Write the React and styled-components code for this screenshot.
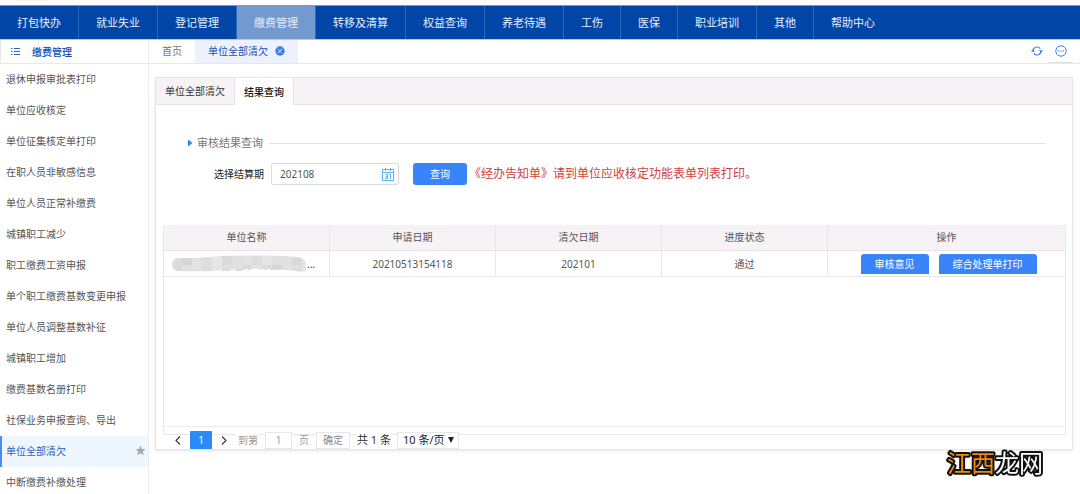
import React, { useState } from "react";
import styled, { createGlobalStyle } from "styled-components";

const Global = createGlobalStyle`
  * { box-sizing: border-box; }
  body { margin: 0; background: #fff; }
  body, button, input, select {
    font-family: "Noto Sans", "Noto Sans CJK SC", sans-serif;
    font-size: 10px;
    line-height: 16px;
    color: #555;
  }
  button, input, select { margin: 0; }
  a { color: inherit; text-decoration: none; }
  ul { list-style: none; margin: 0; padding: 0; }
`;

const Page = styled.div`
  height: 100vh;
  display: flex;
  flex-direction: column;
  overflow: hidden;
`;

const TopStrip = styled.div`
  flex: none;
  height: 5px;
  padding-left: 16px;
  &::before {
    content: "";
    display: block;
    width: 32px;
    height: 1px;
    background: #fdeef0;
  }
`;

const MainNav = styled.nav`
  flex: none;
  display: flex;
  height: 35px;
  background: #0145a6;
  border-top: 1px solid #6f9ad0;
  border-bottom: 1px solid #b5cae6;
`;

const NavLink = styled.a`
  display: flex;
  align-items: center;
  padding: 0 17px;
  font-size: 11px;
  white-space: nowrap;
  color: #e6effa;
  background: ${(p) => (p.$active ? "#7399cf" : "transparent")};
  border-right: 1px solid #2f68b6;
  &:last-child { border-right: 0; }
`;

const Body = styled.div`
  flex: 1;
  min-height: 0;
  display: flex;
`;

const Sidebar = styled.aside`
  flex: none;
  width: 149px;
  border-right: 1px solid #ebebeb;
`;

const SideTitle = styled.div`
  display: flex;
  align-items: center;
  gap: 12px;
  height: 24px;
  padding-left: 10px;
  color: #0f4fae;
  font-weight: 500;
  border-left: 1px solid #e8e8e8;
  border-bottom: 1px solid #e8e8e8;
`;

const SideLink = styled.a`
  display: flex;
  align-items: center;
  justify-content: space-between;
  height: 31px;
  padding: 0 2px 2px 4px;
  border-left: 2px solid ${(p) => (p.$active ? "#4a8af8" : "transparent")};
  background: ${(p) => (p.$active ? "#eef6ff" : "transparent")};
  color: ${(p) => (p.$active ? "#2c5fb8" : "#555")};
`;

const Main = styled.main`
  flex: 1;
  min-width: 0;
`;

const TabBar = styled.div`
  display: flex;
  height: 24px;
  border-bottom: 1px solid #e8e8e8;
`;

const PageTab = styled.a`
  display: flex;
  align-items: center;
  gap: 7px;
  padding: 0 13px 2px;
  color: ${(p) => (p.$active ? "#1552b0" : "#777")};
  background: ${(p) => (p.$active ? "#edf1fe" : "#fff")};
`;

const BarTools = styled.div`
  margin-left: auto;
  display: flex;
  padding-right: 7px;
`;

const IconButton = styled.button`
  display: flex;
  align-items: center;
  justify-content: center;
  width: 24px;
  padding: 0;
  border: 0;
  border-bottom: 1px solid ${(p) => (p.$line ? "#ddd" : "transparent")};
  background: none;
`;

const Card = styled.section`
  margin: 13px 7px 0 6px;
  border: 1px solid #e6e6e6;
  box-shadow: 0 1px 3px rgba(0, 0, 0, 0.1);
  background: #fff;
`;

const CardTabs = styled.div`
  display: flex;
  height: 27px;
  background: #f6f2f6;
  border-bottom: 1px solid #e4e4e4;
`;

const CardTab = styled.button`
  padding: 0 9px;
  border: 0;
  margin-bottom: ${(p) => (p.$active ? "-1px" : "0")};
  border-right: 1px solid #e4e4e4;
  background: ${(p) => (p.$active ? "#fff" : "transparent")};
  color: ${(p) => (p.$active ? "#111" : "#333")};
  font-weight: ${(p) => (p.$active ? 500 : 400)};
`;

const SectionTitle = styled.h2`
  display: flex;
  align-items: center;
  gap: 4px;
  margin: 30px 27px 0 32px;
  font-size: 11px;
  line-height: 16px;
  font-weight: 400;
  color: #777;
  &::after {
    content: "";
    flex: 1;
    height: 1px;
    margin-left: 2px;
    background: #e2e2e2;
  }
`;

const Form = styled.form`
  display: flex;
  align-items: center;
  height: 22px;
  margin: 12px 27px 0 58px;
`;

const Label = styled.label`
  color: #222;
  margin-right: 7px;
`;

const DateBox = styled.div`
  display: flex;
  align-items: center;
  width: 128px;
  height: 22px;
  margin-right: 14px;
  padding-right: 4px;
  border: 1px solid #d6dce6;
  border-radius: 2px;
`;

const DateInput = styled.input`
  flex: 1;
  min-width: 0;
  padding: 0 0 0 8px;
  border: 0;
  outline: 0;
  background: none;
`;

const Primary = styled.button`
  height: ${(p) => (p.$flat ? "20px" : "22px")};
  padding: ${(p) => (p.$flat ? "0 14px" : "0 17px")};
  border: 0;
  border-radius: ${(p) => (p.$flat ? "3px 3px 0 0" : "3px")};
  background: #3a84fb;
  color: #fff;
  line-height: 20px;
`;

const Notice = styled.span`
  margin-left: 2px;
  font-size: 12px;
  color: #d0413e;
`;

const Grid = styled.div`
  margin: 40px 6px 0 7px;
  border: 1px solid #e8e8e8;
  border-top: 0;
`;

const GridBody = styled.div`
  height: 202px;
  border-bottom: 1px solid #ececec;
`;

const Table = styled.table`
  width: 100%;
  table-layout: fixed;
  border-collapse: separate;
  border-spacing: 0;
`;

const Cell = styled.td`
  height: 26px;
  padding: ${(p) => (p.$actions ? "3px 0 2px 4px" : p.$head ? "0 8px 2px" : "0 8px")};
  text-align: center;
  font-weight: 400;
  background: ${(p) => (p.$head ? "#f6f2f6" : "#fff")};
  border-right: 1px solid #e6e6e6;
  border-bottom: 1px solid #e6e6e6;
  &:last-child { border-right: 0; }
`;

const Col = styled.col`
  width: ${(p) => p.$w};
`;

const Actions = styled.div`
  display: flex;
  justify-content: center;
  gap: 10px;
`;

const Masked = styled.div`
  display: flex;
  align-items: center;
  color: #333;
`;

const GridFoot = styled.div`
  height: 7px;
`;

const Pager = styled.div`
  position: relative;
  display: flex;
  align-items: center;
  height: 18px;
  margin: -4px 7px 0 10px;
  color: #999;
`;

const PageButton = styled.button`
  display: flex;
  align-items: center;
  justify-content: center;
  width: ${(p) => (p.$current ? "22px" : "24px")};
  height: 18px;
  padding: 0;
  border: 0;
  border-radius: 1px;
  background: ${(p) => (p.$current ? "#2a8af8" : "transparent")};
  color: #fff;
`;

const JumpLabel = styled.label`
  padding-left: 2px;
  background: #fff;
`;

const PageInput = styled.input`
  width: 27px;
  height: 17px;
  margin: 0 7px;
  padding: 0;
  text-align: center;
  color: #999;
  background: #fff;
  border: 1px solid #e8e8e8;
`;

const GoButton = styled.button`
  height: 17px;
  width: 34px;
  margin: 0 7px;
  padding: 0;
  color: #888;
  background: #fff;
  border: 1px solid #e8e8e8;
  line-height: 15px;
`;

const Total = styled.span`
  color: #333;
  background: #fff;
  font-size: 11px;
`;

const SizeBox = styled.div`
  display: flex;
  align-items: center;
  position: relative;
  width: 62px;
  height: 17px;
  margin-left: 6px;
  background: #fff;
  border: 1px solid #e8e8e8;
  svg { position: absolute; right: 4px; pointer-events: none; }
`;

const SizeSelect = styled.select`
  appearance: none;
  width: 100%;
  height: 16px;
  padding: 0 0 0 5px;
  border: 0;
  background: none;
  font-size: 11px;
  color: #222;
`;

const Watermark = styled.div`
  position: fixed;
  right: 34px;
  bottom: 8px;
  line-height: 0;
`;

const navItems = ["打包快办", "就业失业", "登记管理", "缴费管理", "转移及清算", "权益查询", "养老待遇", "工伤", "医保", "职业培训", "其他", "帮助中心"];

const sideItems = ["退休申报审批表打印", "单位应收核定", "单位征集核定单打印", "在职人员非敏感信息", "单位人员正常补缴费", "城镇职工减少", "职工缴费工资申报", "单个职工缴费基数变更申报", "单位人员调整基数补征", "城镇职工增加", "缴费基数名册打印", "社保业务申报查询、导出", "单位全部清欠", "中断缴费补缴处理"];

const columns = [
  ["单位名称", "166px"],
  ["申请日期", "166px"],
  ["清欠日期", "166px"],
  ["进度状态", "166px"],
  ["操作", "auto"],
];

const MenuIcon = () => (
  <svg width="9" height="9" viewBox="0 0 9 9" fill="none" stroke="#2766c4">
    <path d="M0 1.5h1.5M3 1.5h6M0 4.5h1.5M3 4.5h6M0 7.5h1.5M3 7.5h6" />
  </svg>
);

const StarIcon = () => (
  <svg width="11" height="11" viewBox="0 0 11 11">
    <path d="M5.5.5 7 3.9l3.6.3-2.7 2.4.8 3.6-3.2-1.9-3.2 1.9.8-3.6L.4 4.2 4 3.9z" fill="#aaa" />
  </svg>
);

const CloseIcon = () => (
  <svg width="10" height="10" viewBox="0 0 10 10">
    <circle cx="5" cy="5" r="4.7" fill="#3a7ff2" />
    <path d="M3.2 6.8 6.8 3.2M3.4 3.4l1 1M5.8 5.8l.9.9" stroke="#fff" strokeWidth="1" />
  </svg>
);

const RefreshIcon = () => (
  <svg width="12" height="10" viewBox="0 0 12 10" fill="none" stroke="#3a7ff2" strokeWidth="1.1">
    <path d="M2 5A4 4 0 0 1 9.2 2.6M10 5A4 4 0 0 1 2.8 7.400" />
    <path d="M8 4.300h4L10 6.700zM0 5.700h4L2 3.300z" fill="#3a7ff2" stroke="none" />
  </svg>
);

const MoreIcon = () => (
  <svg width="12" height="12" viewBox="0 0 12 12" fill="none" stroke="#3a7ff2">
    <circle cx="6" cy="6" r="5.2" />
    <path d="M3 6h1.4M5.3 6h1.4M7.6 6H9" strokeWidth="1.2" />
  </svg>
);

const Triangle = () => (
  <svg width="5" height="8" viewBox="0 0 5 8">
    <path d="M0 .5 4.5 4 0 7.5z" fill="#1f8bf0" />
  </svg>
);

const CalendarIcon = () => (
  <svg width="12" height="13" viewBox="0 0 12 13" fill="none" stroke="#5eb4f0">
    <path d="M.5 1.5h11v11H.5zM.5 4.5h11M3.5 0v3M8.5 0v3" />
    <path d="M3 6.5h2.5v4H3M3.5 8.5h2M7 6.5h1.5v4.5" />
  </svg>
);

const Chevron = ({ back }) => (
  <svg width="6" height="9" viewBox="0 0 6 9" fill="none" stroke="#333" strokeWidth="1.1">
    <path d={back ? "M5 .5 1 4.5l4 4" : "M1 .5l4 4-4 4"} />
  </svg>
);

const maskTones = ["#dcdcdc", "#d6d6d6", "#e2e2e2", "#dedede", "#e6e6e6", "#dadada", "#e0e0e0", "#e3e3e3", "#dddddd", "#e5e5e5", "#dfdfdf", "#e1e1e1", "#d9d9d9", "#e4e4e4"];

const MaskBlock = () => (
  <svg width="135" height="18" viewBox="0 0 135 18">
    <clipPath id="mask-shape">
      <path d="M6 3C18 3 30 3 42 1.500 60 0 110 0 126 2q8 2 8 8v6q-4 1-10 0C100 13 70 14 50 15 36 17 20 16 6 16Q0 15 0 9 0 4 6 3z" />
    </clipPath>
    <g stroke="#777" strokeWidth=".8" fill="none" opacity=".75">
      <path d="M32 15l2-2m2 2l2-2m2 0v2m4-2l3 2m3 0h8m2-3v3m4 0h6m3-2l-2 2m6-2v2m5-2h5m2 0v2m6-2l-2 2m6-1h5m3-1v2m5-3v3m4-2l2 2m3-2v2" />
    </g>
    <g clipPath="url(#mask-shape)">
      {maskTones.map((tone, i) => (
        <g key={i}>
          <rect x={i * 10} y="0" width="10" height="10" fill={tone} />
          <rect x={i * 10} y="10" width="10" height="8" fill={maskTones[(i + 5) % 14]} />
        </g>
      ))}
    </g>
  </svg>
);

const Logo = () => (
  <svg width="102" height="44" viewBox="0 0 102 44" overflow="visible" fontFamily="'Noto Sans CJK SC', sans-serif" fontSize="24" fontWeight="400">
    <text x="3" y="30" stroke="#111" strokeWidth="4" strokeLinejoin="round" paintOrder="stroke">
      <tspan fill="#f18a12">江西</tspan>
      <tspan fill="#fff">龙网</tspan>
    </text>
  </svg>
);

export default function App() {
  const [period, setPeriod] = useState("202108");
  const [page, setPage] = useState("1");

  return (
    <Page>
      <Global />
      <TopStrip />
      <MainNav>
        {navItems.map((name) => (
          <NavLink key={name} href="#" $active={name === "缴费管理"}>{name}</NavLink>
        ))}
      </MainNav>
      <Body>
        <Sidebar>
          <SideTitle><MenuIcon />缴费管理</SideTitle>
          <ul>
            {sideItems.map((name) => (
              <li key={name}>
                <SideLink href="#" $active={name === "单位全部清欠"}>
                  {name}
                  {name === "单位全部清欠" && <StarIcon />}
                </SideLink>
              </li>
            ))}
          </ul>
        </Sidebar>
        <Main>
          <TabBar>
            <PageTab href="#">首页</PageTab>
            <PageTab href="#" $active>单位全部清欠<CloseIcon /></PageTab>
            <BarTools>
              <IconButton aria-label="刷新"><RefreshIcon /></IconButton>
              <IconButton aria-label="更多" $line><MoreIcon /></IconButton>
            </BarTools>
          </TabBar>
          <Card>
            <CardTabs>
              <CardTab>单位全部清欠</CardTab>
              <CardTab $active>结果查询</CardTab>
            </CardTabs>
            <SectionTitle><Triangle />审核结果查询</SectionTitle>
            <Form onSubmit={(e) => e.preventDefault()}>
              <Label htmlFor="period">选择结算期</Label>
              <DateBox>
                <DateInput id="period" value={period} onChange={(e) => setPeriod(e.target.value)} />
                <CalendarIcon />
              </DateBox>
              <Primary type="submit">查询</Primary>
              <Notice>《经办告知单》请到单位应收核定功能表单列表打印。</Notice>
            </Form>
            <Grid>
              <GridBody>
                <Table>
                  <colgroup>
                    {columns.map(([name, w]) => <Col key={name} $w={w} />)}
                  </colgroup>
                  <thead>
                    <tr>
                      {columns.map(([name]) => <Cell as="th" key={name} $head>{name}</Cell>)}
                    </tr>
                  </thead>
                  <tbody>
                    <tr>
                      <Cell><Masked><MaskBlock />...</Masked></Cell>
                      <Cell>20210513154118</Cell>
                      <Cell>202101</Cell>
                      <Cell>通过</Cell>
                      <Cell $actions>
                        <Actions>
                          <Primary type="button" $flat>审核意见</Primary>
                          <Primary type="button" $flat>综合处理单打印</Primary>
                        </Actions>
                      </Cell>
                    </tr>
                  </tbody>
                </Table>
              </GridBody>
              <GridFoot />
            </Grid>
            <Pager>
              <PageButton aria-label="上一页"><Chevron back /></PageButton>
              <PageButton $current>1</PageButton>
              <PageButton aria-label="下一页"><Chevron /></PageButton>
              <JumpLabel htmlFor="page">到第</JumpLabel>
              <PageInput id="page" value={page} onChange={(e) => setPage(e.target.value)} />
              页
              <GoButton>确定</GoButton>
              <Total>共 1 条</Total>
              <SizeBox>
                <SizeSelect aria-label="每页条数">
                  <option>10 条/页</option>
                  <option>20 条/页</option>
                </SizeSelect>
                <svg width="6" height="6" viewBox="0 0 6 6"><path d="M0 0h6L3 6z" fill="#222" /></svg>
              </SizeBox>
            </Pager>
          </Card>
        </Main>
      </Body>
      <Watermark><Logo /></Watermark>
    </Page>
  );
}
